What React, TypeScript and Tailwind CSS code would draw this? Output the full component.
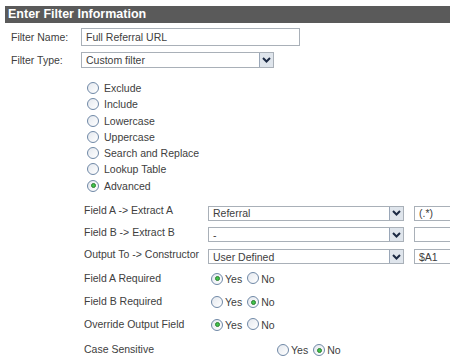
import React from 'react';

const filterTypes = ['Exclude', 'Include', 'Lowercase', 'Uppercase', 'Search and Replace', 'Lookup Table', 'Advanced'];

const Radio = ({ checked }: { checked?: boolean }) => (
  <span className="relative inline-flex h-[12px] w-[12px] shrink-0 items-center justify-center rounded-full border border-[#6f88a6] bg-gradient-to-br from-[#e4e8ee] to-white">
    {checked && <span className="h-[5px] w-[5px] rounded-full border border-[#2f7d32] bg-[#3fc44a]" />}
  </span>
);

const Arrow = () => (
  <span className="flex h-full w-[14px] shrink-0 items-center justify-center border-l border-[#9aa7b8] bg-[#dfe5ec]">
    <svg width="9" height="6" viewBox="0 0 9 6">
      <polyline points="1,1 4.5,4.5 8,1" fill="none" stroke="#1c2a44" strokeWidth="2" />
    </svg>
  </span>
);

const Select = ({ value, width }: { value: string; width: string }) => (
  <div className={`flex h-full items-stretch border border-[#a9b0b8] bg-white ${width}`}>
    <span className="flex flex-1 items-center pl-[4px]">{value}</span>
    <Arrow />
  </div>
);

const YesNo = ({ yes }: { yes: boolean }) => (
  <div className="flex items-center">
    <Radio checked={yes} />
    <span className="ml-[2px]">Yes</span>
    <span className="ml-[5px]"><Radio checked={!yes} /></span>
    <span className="ml-[2px]">No</span>
  </div>
);

const App = () => {
  return (
    <div className="h-[363px] w-[450px] overflow-hidden bg-white font-['Liberation_Sans',Arial,sans-serif] text-[10.5px] leading-[12px] text-[#404040]">
      <div className="ml-[5px] mt-[6px] h-[17px] bg-[#5a5a5a] pl-[3px] text-[12.5px] font-bold leading-[17px] text-white">
        Enter Filter Information
      </div>

      <div className="mt-[5px] flex h-[18px] items-center">
        <span className="w-[81px] pl-[11px]">Filter Name:</span>
        <div className="flex h-full w-[219px] items-center border border-[#a9b0b8] pl-[4px]">Full Referral URL</div>
      </div>

      <div className="mt-[6px] flex h-[16px] items-center">
        <span className="w-[81px] pl-[11px]">Filter Type:</span>
        <Select value="Custom filter" width="w-[193px]" />
      </div>

      <div className="mt-[12px] flex flex-col pl-[87px]">
        {filterTypes.map((t) => (
          <div key={t} className="flex h-[16.25px] items-center">
            <Radio checked={t === 'Advanced'} />
            <span className="ml-[5px]">{t}</span>
          </div>
        ))}
      </div>

      <div className="mt-[12px] flex flex-col gap-[6.7px] pl-[84px]">
        {[
          ['Field A -> Extract A', 'Referral', '(.*)'],
          ['Field B -> Extract B', '-', ''],
          ['Output To -> Constructor', 'User Defined', '$A1'],
        ].map(([label, value, text]) => (
          <div key={label} className="flex h-[15px] items-center">
            <span className="w-[124px] -translate-y-[3px]">{label}</span>
            <Select value={value} width="w-[196px]" />
            <div className="ml-[10px] flex h-full flex-1 items-center border border-r-0 border-[#a9b0b8] pl-[4px]">{text}</div>
          </div>
        ))}
      </div>

      <div className="mt-[3px] flex flex-col pl-[84px]">
        {[
          ['Field A Required', true],
          ['Field B Required', false],
          ['Override Output Field', true],
        ].map(([label, yes]) => (
          <div key={label as string} className="flex h-[23px] items-center">
            <span className="w-[127px] -translate-y-[1px]">{label as string}</span>
            <YesNo yes={yes as boolean} />
          </div>
        ))}
        <div className="mt-[2px] flex h-[23px] items-center">
          <span className="w-[193px] -translate-y-[1px]">Case Sensitive</span>
          <YesNo yes={false} />
        </div>
      </div>
    </div>
  );
};

export default App;
